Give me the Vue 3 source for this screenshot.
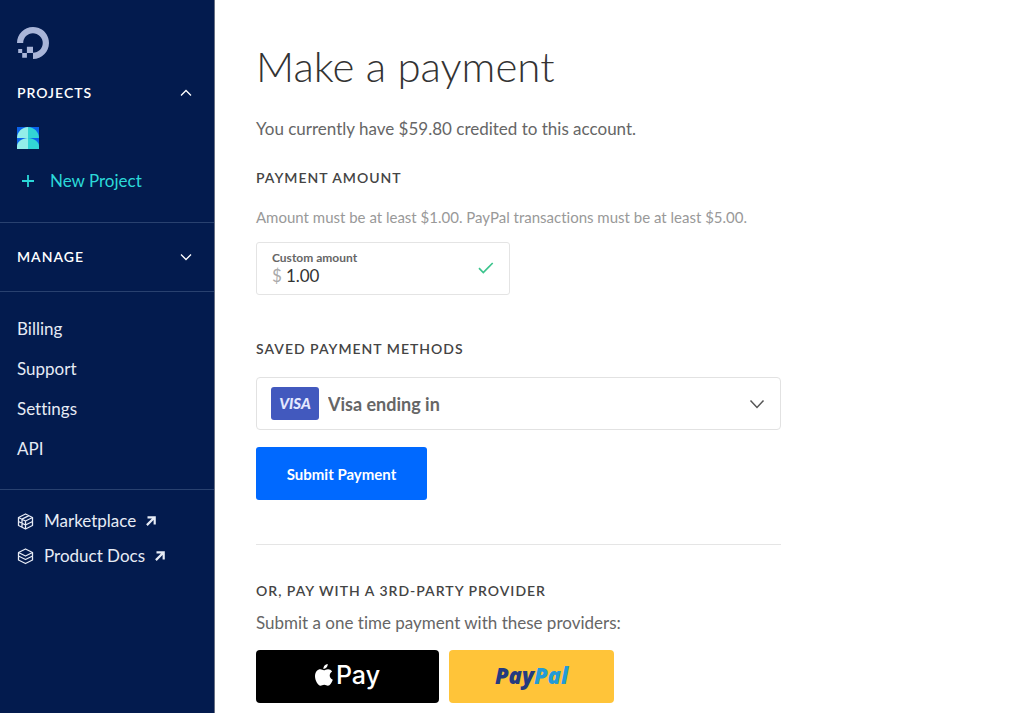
<script setup>
import { ref } from 'vue'

const amount = ref('1.00')
const method = ref('visa')
const links = ['Billing', 'Support', 'Settings', 'API']
</script>

<template>
  <div class="page">
    <aside class="sidebar">
      <div class="group projects">
        <a class="logo" href="#" aria-label="Home">
          <svg width="32" height="32" viewBox="0 0 32 32" fill="#a9b5d8">
            <path d="M16 32v-6.2c6.600 0 11.600-6.500 9.100-13.400-1-2.500-3-4.500-5.500-5.500C12.700 4.400 6.200 9.400 6.200 16H0C0 5.600 10.100-2.600 21 .8c4.800 1.500 8.700 5.300 10.200 10.200C34.600 21.900 26.400 32 16 32z" />
            <path d="M9.900 19.800H16V26H9.900zM5.200 26h4.700v4.700H5.200zM1.200 22h4v4h-4z" />
          </svg>
        </a>
        <button class="heading" type="button" aria-expanded="true">
          PROJECTS
          <svg width="12" height="8" viewBox="0 0 12 8" fill="none" stroke="currentColor" stroke-width="1.300"><path d="M1 6.500 6 1.500l5 5" /></svg>
        </button>
        <a class="avatar" href="#" aria-label="Current project">
          <svg width="22" height="22" viewBox="0 0 22 22">
            <path fill="#0a63ea" d="M0 0h22v22H0z" />
            <path fill="#93eee9" d="M11 0v11H0C0 5 5 0 11 0z" />
            <path fill="#32d5d5" d="M11 0c6 0 11 5 11 11H11z" />
            <path fill="#93eee9" d="M11 11v11H0v-3c0-4 5-8 11-8z" />
            <path fill="#32d5d5" d="M11 11c6 0 11 4 11 8v3H11z" />
          </svg>
        </a>
        <a class="new" href="#">
          <svg width="12" height="12" viewBox="0 0 12 12" fill="none" stroke="currentColor" stroke-width="1.800"><path d="M6 0v12M0 6h12" /></svg>
          New Project
        </a>
      </div>
      <div class="group manage">
        <button class="heading" type="button" aria-expanded="false">
          MANAGE
          <svg width="12" height="8" viewBox="0 0 12 8" fill="none" stroke="currentColor" stroke-width="1.300"><path d="m1 1.500 5 5 5-5" /></svg>
        </button>
      </div>
      <nav class="group links">
        <a v-for="link in links" :key="link" href="#">{{ link }}</a>
      </nav>
      <nav class="external">
        <a href="#">
          <svg width="17" height="17" viewBox="0 0 17 17" fill="none" stroke="currentColor" stroke-width="1.300" stroke-linejoin="round">
            <path d="M8.500 1 15.500 4.500v8l-7 3.500-7-3.500v-8zM1.500 4.500l7 3.500 7-3.500M8.500 8v8M5 6.200l7-3.500M5 6.200v8M1.500 8.500l7 3.500 7-3.500" />
          </svg>
          Marketplace
          <svg class="arrow" width="10" height="10" viewBox="0 0 10 10" fill="none" stroke="currentColor" stroke-width="2.200"><path d="M1.500 1.300h7.200v7.200M8.500 1.500.9 9.100" /></svg>
        </a>
        <a href="#">
          <svg width="17" height="17" viewBox="0 0 17 17" fill="none" stroke="currentColor" stroke-width="1.300" stroke-linejoin="round">
            <path d="m8.500 1 7 3.500-7 3.500-7-3.500zM1.500 4.500V8l7 3.500 7-3.500V4.500M1.500 8.500V12l7 3.500 7-3.500V8.500" />
          </svg>
          Product Docs
          <svg class="arrow" width="10" height="10" viewBox="0 0 10 10" fill="none" stroke="currentColor" stroke-width="2.200"><path d="M1.500 1.300h7.200v7.200M8.500 1.500.9 9.100" /></svg>
        </a>
      </nav>
    </aside>

    <main class="content">
      <h1>Make a payment</h1>
      <p class="lead">You currently have $59.80 credited to this account.</p>

      <h2>PAYMENT AMOUNT</h2>
      <p class="hint">Amount must be at least $1.00. PayPal transactions must be at least $5.00.</p>
      <div class="amount">
        <div class="field">
          <label for="amount">Custom amount</label>
          <div class="value">
            <span>$</span>
            <input id="amount" v-model="amount" type="text" inputmode="decimal" />
          </div>
        </div>
        <svg width="16" height="12" viewBox="0 0 16 12" fill="none" stroke="#3cc48d" stroke-width="1.700"><path d="m1 6.200 4.300 4.300L14.700 1" /></svg>
      </div>

      <h2 id="methods">SAVED PAYMENT METHODS</h2>
      <div class="method">
        <svg class="visa" width="48" height="33" viewBox="0 0 48 33" role="img" aria-label="Visa">
          <rect width="48" height="33" rx="3" fill="#4259be" />
          <text x="24" y="22" text-anchor="middle">VISA</text>
        </svg>
        <select v-model="method" aria-labelledby="methods">
          <option value="visa">Visa ending in</option>
        </select>
        <svg class="caret" width="16" height="10" viewBox="0 0 16 10" fill="none" stroke="#555" stroke-width="1.500"><path d="m1.500 1.500 6.500 7 6.500-7" /></svg>
      </div>
      <button class="submit" type="button">Submit Payment</button>

      <section class="providers">
        <h2>OR, PAY WITH A 3RD-PARTY PROVIDER</h2>
        <p class="lead">Submit a one time payment with these providers:</p>
        <div class="buttons">
          <button class="apple" type="button" aria-label="Apple Pay">
            <svg width="18" height="22" viewBox="0 0 18 22" fill="#fff">
              <path d="M12.700 0c.2 2.600-1.900 4.900-4.300 4.900C8.200 2.500 10.400.2 12.700 0zM8.900 6.300c1 0 2.200-1.100 4.100-1.100 1.600 0 3.200.9 4.100 2.300-3.500 2.100-3 6.800.7 8.200-.9 2.500-2.800 6-4.900 6-1.400 0-2-.9-3.700-.9-1.800 0-2.400.9-3.700.9C3 21.700 0 16.500 0 12.300c0-4.500 2.800-7 5.300-7 1.600 0 2.700 1 3.600 1z" />
            </svg>
            <span>Pay</span>
          </button>
          <button class="paypal" type="button" aria-label="PayPal"><span>Pay</span><span class="pal">Pal</span></button>
        </div>
      </section>
    </main>
  </div>
</template>

<style>
body { margin: 0; background: #fff; }
</style>

<style scoped>
.page {
  display: grid;
  grid-template-columns: 215px 1fr;
  min-height: 100vh;
  font-family: Lato, "Liberation Sans", sans-serif;
  font-size: 17px;
  font-variant-ligatures: none;
  line-height: 24px;
  color: #666;
}
.page * { box-sizing: border-box; }
svg { flex: none; display: block; }
button, input, select { font: inherit; color: inherit; border: 0; padding: 0; margin: 0; background: none; }
a { color: inherit; text-decoration: none; }
.sidebar { background: #031b4e; color: #e6ebf5; border-right: 1px solid #687083; }
.group { border-bottom: 1px solid #29416f; padding: 0 22px 0 17px; display: flex; flex-direction: column; }
.projects { padding-top: 27px; padding-bottom: 29px; }
.logo { align-self: flex-start; }
.heading {
  display: flex; align-items: center; justify-content: space-between;
  font-size: 14px; font-weight: 600; letter-spacing: 1px; line-height: 20px; color: #fff; cursor: pointer;
}
.projects .heading { margin-top: 24px; }
.avatar { align-self: flex-start; margin-top: 24px; }
.new { display: flex; align-items: center; gap: 16px; padding-left: 5px; margin-top: 20px; color: #2bd9d9; }
.manage { padding-top: 24px; padding-bottom: 24px; }
.links { padding-top: 25px; padding-bottom: 28px; gap: 16px; }
.external { padding: 19px 17px; display: flex; flex-direction: column; gap: 11px; }
.external a { display: flex; align-items: center; gap: 10px; }
.content { padding: 42px 41px 11px; max-width: 607px; }
h1, h2, p { margin: 0; }
h1 { font-size: 42px; font-weight: 300; line-height: 48px; color: #333; }
.lead { margin-top: 27px; }
h2 { font-size: 14px; font-weight: 600; line-height: 20px; letter-spacing: 1px; color: #444; margin-top: 27px; }
.hint { font-size: 15px; line-height: 20px; color: #999; margin-top: 19px; }
.amount {
  display: flex; align-items: center; justify-content: space-between;
  width: 254px; margin-top: 15px; padding: 7px 15px 8px;
  border: 1px solid #e4e4e4; border-radius: 3px;
}
.field { flex: 1; min-width: 0; }
label { display: block; font-size: 12px; font-weight: 700; line-height: 16px; color: #666; }
.value { display: flex; gap: 4px; line-height: 20px; color: #aaa; }
.value input { width: 100%; min-width: 0; color: #333; line-height: 20px; height: 20px; outline: 0; }
#methods { margin-top: 44px; }
.method { display: grid; align-items: center; height: 53px; margin-top: 18px; border: 1px solid #e2e2e2; border-radius: 4px; }
.method > * { grid-area: 1 / 1; }
.visa { margin-left: 14px; pointer-events: none; }
.visa text { font: italic 900 15px Lato, sans-serif; fill: #e4e9ff; }
.method select { width: 100%; height: 100%; padding-left: 71px; appearance: none; font-size: 18px; font-weight: 700; color: #666; outline: 0; }
.caret { justify-self: end; margin-right: 15px; pointer-events: none; }
.submit { display: block; width: 171px; height: 53px; margin-top: 17px; border-radius: 3px; background: #0069ff; color: #fff; font-size: 15px; font-weight: 700; }
.providers { margin-top: 44px; border-top: 1px solid #e5e5e5; }
.providers h2 { margin-top: 36px; }
.providers .lead { margin-top: 10px; }
.buttons { display: flex; gap: 10px; margin-top: 15px; }
.buttons button { height: 53px; border-radius: 4px; display: flex; align-items: center; justify-content: center; padding-bottom: 3px; }
.apple { width: 183px; gap: 3px; background: #000; color: #fff; font: 500 25px Inter, sans-serif; }
.paypal { width: 165px; background: #ffc439; color: #253b80; font: italic 800 22px "Open Sans", sans-serif; }
.pal { color: #239bd7; }
</style>
